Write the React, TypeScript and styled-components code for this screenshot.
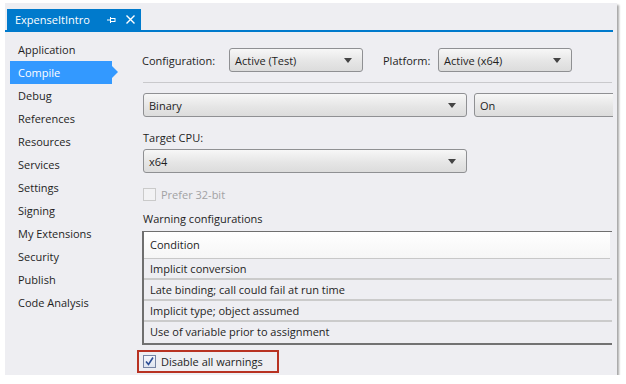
import React from "react";
import styled, { createGlobalStyle } from "styled-components";

const navItems = [
  "Application",
  "Compile",
  "Debug",
  "References",
  "Resources",
  "Services",
  "Settings",
  "Signing",
  "My Extensions",
  "Security",
  "Publish",
  "Code Analysis",
];

const warnings = [
  "Implicit conversion",
  "Late binding; call could fail at run time",
  "Implicit type; object assumed",
  "Use of variable prior to assignment",
];

function PinIcon() {
  return (
    <svg width="9" height="8" viewBox="0 0 9 8">
      <path d="M0 4h3M3.5 1v6" stroke="#fff" strokeWidth="1" fill="none" />
      <rect x="3.5" y="2.5" width="4.5" height="3" stroke="#fff" strokeWidth="1" fill="none" />
    </svg>
  );
}

function CloseIcon() {
  return (
    <svg width="9" height="9" viewBox="0 0 9 9">
      <path d="M0.5 0.5l8 8M8.5 0.5l-8 8" stroke="#fff" strokeWidth="1.4" fill="none" />
    </svg>
  );
}

function CheckMark() {
  return (
    <svg width="11" height="11" viewBox="0 0 11 11">
      <path d="M2 5.5l2.5 3L9 1.5" stroke="#2b4c94" strokeWidth="1.6" fill="none" />
    </svg>
  );
}

function Dropdown({ value, width, arrow = true }: { value: string; width: number; arrow?: boolean }) {
  return (
    <Select $width={width}>
      <SelectText>{value}</SelectText>
      {arrow && <SelectArrow />}
    </Select>
  );
}

export default function App() {
  return (
    <>
      <GlobalStyle />
      <Panel>
        <TabStrip>
          <Tab>
            <TabTitle>ExpenseItIntro</TabTitle>
            <TabButton>
              <PinIcon />
            </TabButton>
            <TabButton>
              <CloseIcon />
            </TabButton>
          </Tab>
        </TabStrip>
        <Body>
          <Sidebar>
            {navItems.map((item) => (
              <NavItem key={item} $selected={item === "Compile"}>
                {item}
              </NavItem>
            ))}
          </Sidebar>
          <Content>
            <ConfigRow>
              <FieldLabel $width={87}>Configuration:</FieldLabel>
              <Dropdown value="Active (Test)" width={134} />
              <FieldLabel $width={55} $offset={20}>
                Platform:
              </FieldLabel>
              <Dropdown value="Active (x64)" width={134} />
            </ConfigRow>
            <Separator />
            <OptionRow>
              <Dropdown value="Binary" width={324} />
              <Dropdown value="On" width={200} arrow={false} />
            </OptionRow>
            <BlockLabel $top={12}>Target CPU:</BlockLabel>
            <CpuRow>
              <Dropdown value="x64" width={324} />
            </CpuRow>
            <CheckRow>
              <CheckBox $disabled />
              <CheckText $disabled>Prefer 32-bit</CheckText>
            </CheckRow>
            <BlockLabel $top={9}>Warning configurations</BlockLabel>
            <Table>
              <TableHeader>Condition</TableHeader>
              {warnings.map((w) => (
                <TableRow key={w}>{w}</TableRow>
              ))}
            </Table>
            <Highlight>
              <CheckBox>
                <CheckMark />
              </CheckBox>
              <CheckText>Disable all warnings</CheckText>
            </Highlight>
          </Content>
        </Body>
      </Panel>
    </>
  );
}

const GlobalStyle = createGlobalStyle`
  body {
    margin: 0;
    background: #ffffff;
    font-family: "Open Sans", "Noto Sans", sans-serif;
    font-size: 11px;
    color: #1e1e1e;
  }
`;

const Panel = styled.div`
  margin: 3px 0 0 5px;
  width: 612px;
  height: 372px;
  background: #eeeef2;
  box-shadow: 2px 2px 2px rgba(0, 0, 0, 0.35);
  display: flex;
  flex-direction: column;
  overflow: hidden;
`;

const TabStrip = styled.div`
  display: flex;
  padding: 6px 0 0 2px;
  margin-right: 4px;
  border-bottom: 2px solid #007acc;
`;

const Tab = styled.div`
  display: flex;
  align-items: center;
  width: 134px;
  height: 21px;
  padding-left: 8px;
  box-sizing: border-box;
  background: #007acc;
  color: #ffffff;
`;

const TabTitle = styled.span`
  flex: 1;
`;

const TabButton = styled.span`
  display: flex;
  align-items: center;
  justify-content: center;
  width: 17px;
  height: 21px;
  margin-right: 2px;
`;

const Body = styled.div`
  display: flex;
  flex: 1;
`;

const Sidebar = styled.div`
  width: 137px;
  padding: 6px 0 0 5px;
  box-sizing: border-box;
`;

const NavItem = styled.div<{ $selected?: boolean }>`
  position: relative;
  width: 102px;
  height: 23px;
  line-height: 23px;
  padding-left: 8px;
  box-sizing: border-box;
  background: ${(p) => (p.$selected ? "#3399ff" : "transparent")};
  color: ${(p) => (p.$selected ? "#ffffff" : "#1e1e1e")};

  &::after {
    content: "";
    display: ${(p) => (p.$selected ? "block" : "none")};
    position: absolute;
    right: -6px;
    top: 5px;
    border-left: 6px solid #3399ff;
    border-top: 6px solid transparent;
    border-bottom: 6px solid transparent;
  }
`;

const Content = styled.div`
  flex: 1;
  min-width: 0;
  padding: 16px 3px 0 0;
  display: flex;
  flex-direction: column;
`;

const ConfigRow = styled.div`
  display: flex;
  align-items: center;
  height: 24px;
`;

const FieldLabel = styled.span<{ $width: number; $offset?: number }>`
  width: ${(p) => p.$width}px;
  margin-left: ${(p) => p.$offset ?? 0}px;
  flex-shrink: 0;
`;

const Select = styled.div<{ $width: number }>`
  display: flex;
  align-items: center;
  flex-shrink: 0;
  width: ${(p) => p.$width}px;
  height: 24px;
  padding: 0 10px 0 5px;
  box-sizing: border-box;
  border: 1px solid #8f9093;
  border-radius: 3px;
  background: linear-gradient(#f7f7f7, #e6e6e6 55%, #dcdcdc);
`;

const SelectText = styled.span`
  flex: 1;
`;

const SelectArrow = styled.span`
  width: 0;
  height: 0;
  border-left: 4px solid transparent;
  border-right: 4px solid transparent;
  border-top: 5px solid #444;
`;

const Separator = styled.div`
  height: 1px;
  margin: 10px 2px 0 1px;
  background: #c9c9cc;
`;

const OptionRow = styled.div`
  display: flex;
  gap: 7px;
  margin: 10px 1px 0 1px;
  overflow: hidden;
`;

const BlockLabel = styled.div<{ $top: number }>`
  margin-top: ${(p) => p.$top}px;
  line-height: 17px;
  padding-left: 1px;
`;

const CpuRow = styled.div`
  display: flex;
  margin-top: 3px;
  margin-left: 1px;
`;

const CheckRow = styled.div`
  display: flex;
  align-items: center;
  gap: 5px;
  margin-top: 15px;
  margin-left: 1px;
  height: 13px;
`;

const CheckBox = styled.span<{ $disabled?: boolean }>`
  display: flex;
  align-items: center;
  justify-content: center;
  width: 13px;
  height: 13px;
  box-sizing: border-box;
  border: 1px solid ${(p) => (p.$disabled ? "#cacaca" : "#7684a4")};
  background: ${(p) => (p.$disabled ? "#f2f2f4" : "linear-gradient(#f4f6fb, #dfe4ef)")};
`;

const CheckText = styled.span<{ $disabled?: boolean }>`
  color: ${(p) => (p.$disabled ? "#a2a2a4" : "#1e1e1e")};
`;

const Table = styled.div`
  margin-top: 4px;
  margin-right: 2px;
  border-top: 1px solid #6f6f6f;
  border-left: 2px solid #6f6f6f;
  border-bottom: 2px solid #727272;
`;

const TableHeader = styled.div`
  height: 26px;
  line-height: 26px;
  padding-left: 6px;
  margin-right: 2px;
  background: linear-gradient(#ffffff, #f6f6f6);
  border-bottom: 1px solid #c8c8c8;
`;

const TableRow = styled.div`
  height: 21px;
  line-height: 20px;
  padding-left: 6px;
  box-sizing: border-box;
  border-bottom: 2px solid #cbcbcb;

  &:last-child {
    border-bottom: none;
  }
`;

const Highlight = styled.div`
  display: flex;
  align-items: center;
  gap: 5px;
  align-self: flex-start;
  width: 142px;
  height: 23px;
  margin: 5px 0 0 -5px;
  padding-left: 4px;
  box-sizing: border-box;
  border: 2px solid #b83222;
`;
